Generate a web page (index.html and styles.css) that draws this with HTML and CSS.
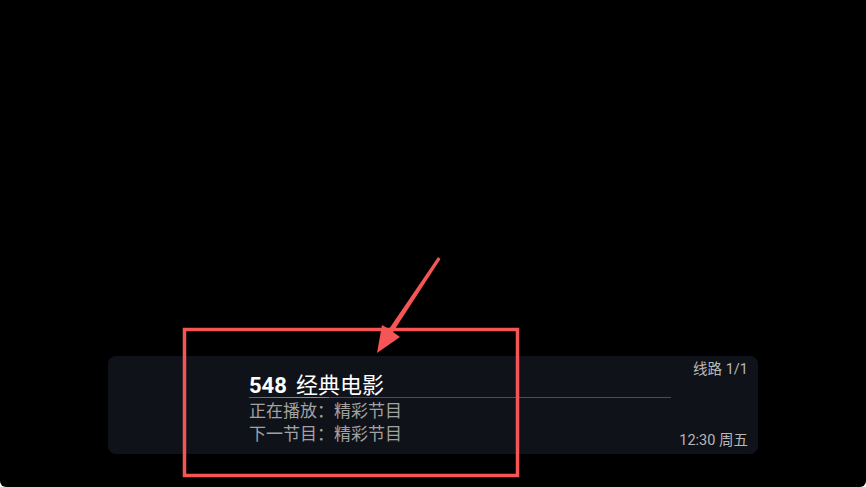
FILE: index.html
```html
<!DOCTYPE html>
<html lang="zh-CN">
<head>
<meta charset="utf-8">
<title>频道信息</title>
<link rel="stylesheet" href="styles.css">
</head>
<body>
<div class="screen">
  <div class="osd">
    <div class="info">
      <div class="title"><span class="num">548</span><span class="name">经典电影</span></div>
      <div class="progress"><div class="progress-fill" style="width: 80px"></div></div>
      <div class="line">正在播放：精彩节目</div>
      <div class="line">下一节目：精彩节目</div>
    </div>
    <div class="meta">
      <div class="route">线路 1/1</div>
      <div class="clock">12:30 周五</div>
    </div>
  </div>
  <svg class="annotation" width="866" height="487" viewBox="0 0 866 487">
    <rect x="184.5" y="329.5" width="333" height="146" fill="none" stroke="#f65556" stroke-width="3.5"/>
    <polygon points="438,257 440.5,259 393,332 400,337 377,353 382,325 389,329" fill="#f65556"/>
  </svg>
</div>
</body>
</html>
```
FILE: styles.css
```css
html {
  background: #ffffff;
}
body {
  margin: 0;
  background: #ffffff;
}
.screen {
  position: relative;
  width: 866px;
  height: 487px;
  background: #000000;
  border-radius: 0 0 6px 6px;
  display: flex;
  flex-direction: column;
  justify-content: flex-end;
  overflow: hidden;
  font-family: Roboto, "Noto Sans CJK SC", sans-serif;
}
.osd {
  margin: 0 108px 33px;
  height: 98px;
  box-sizing: border-box;
  background: #0f1219;
  border-radius: 8px;
  display: flex;
  padding-left: 141px;
}
.info {
  width: 422px;
  padding-top: 14px;
  display: flex;
  flex-direction: column;
}
.title {
  height: 26px;
  line-height: 26px;
  font-size: 22px;
  color: #ffffff;
  white-space: nowrap;
}
.num {
  font-weight: 700;
  margin-right: 9px;
}
.name {
  font-family: "Noto Sans CJK SC", sans-serif;
}
.progress {
  margin-top: 1px;
  height: 1px;
  background: #4a4d53;
  position: relative;
}
.progress-fill {
  height: 1px;
  background: linear-gradient(90deg, #2a6fb8, #45a8f5 80%, #3a8ad8);
}
.line {
  font-family: "Noto Sans CJK SC", sans-serif;
  font-size: 17px;
  line-height: 23px;
  color: #a2a2a2;
  white-space: nowrap;
}
.line:first-of-type {
  margin-top: 1px;
}
.meta {
  margin-left: auto;
  padding: 4px 10px 3px 0;
  display: flex;
  flex-direction: column;
  justify-content: space-between;
  align-items: flex-end;
  font-size: 14.5px;
  line-height: 20px;
  color: #b8b8b8;
  white-space: nowrap;
}
.annotation {
  position: absolute;
  left: 0;
  top: 0;
  pointer-events: none;
}
```
